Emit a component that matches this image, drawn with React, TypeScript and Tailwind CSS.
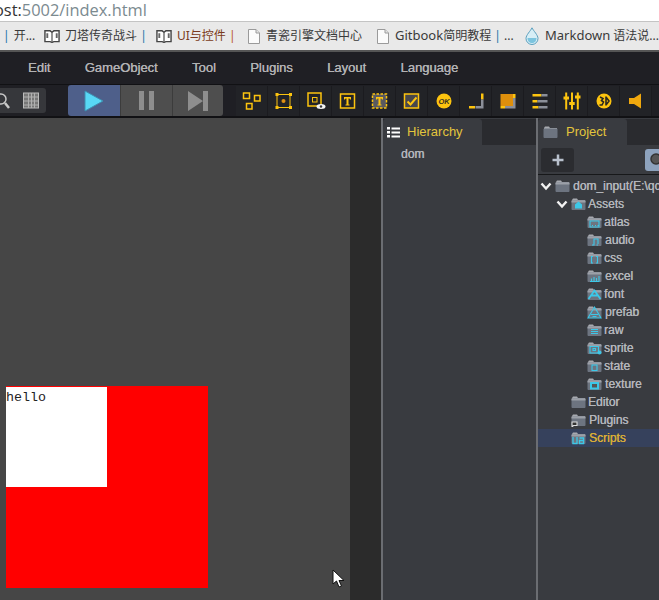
import type { ReactNode } from "react";

const Y = "#fdc40f";
const G = "#8b8f99";
const C = "#3cc8e8";

function BookIcon() {
  return (
    <svg width="16" height="14" viewBox="0 0 17 14" className="shrink-0">
      <path d="M1 1.5h5.500l2 1.500 2-1.500H16V13h-5.500l-2 .8-2-.8H1z" fill="#fff" stroke="#444" strokeWidth="1.500" />
      <path d="M8.500 3v10" stroke="#444" strokeWidth="1.200" />
      <path d="M3.500 4v5M13.500 4v5" stroke="#666" strokeWidth="2" />
    </svg>
  );
}

function DocIcon() {
  return (
    <svg width="12" height="15" viewBox="0 0 12 15" className="shrink-0">
      <path d="M.5.500h7.500l3.500 3.500v10.500H.5z" fill="#fbfbfb" stroke="#9a9a9a" />
      <path d="M8 .5V4h3.500" fill="#e4e4e4" stroke="#9a9a9a" />
    </svg>
  );
}

function DropIcon() {
  return (
    <svg width="14" height="18" viewBox="0 0 14 18" className="shrink-0">
      <path d="M7 .8C5.500 4 1 8 1 11.500a6 6 0 0 0 12 0C13 8 8.500 4 7 .8z" fill="#d7eef6" stroke="#5b9fbd" />
      <path d="M2.500 11h9c0 3-2 5-4.500 5s-4.500-2-4.500-5z" fill="#7cc4de" />
    </svg>
  );
}

function Bookmark({ icon, gap, children }: { icon?: ReactNode; gap: string; children: ReactNode }) {
  return (
    <div className={`flex items-center whitespace-nowrap ${gap}`}>
      {icon}
      <span>{children}</span>
    </div>
  );
}

function ToolCell({ children }: { children: ReactNode }) {
  return <div className="flex h-[30px] w-[32px] items-center justify-center border-r border-[#1b1b1f] bg-[#222327]">{children}</div>;
}

function Tool({ d }: { d: ReactNode }) {
  return (
    <ToolCell>
      <svg width="20" height="20" viewBox="0 0 20 20">{d}</svg>
    </ToolCell>
  );
}

const tools: ReactNode[] = [
  <g fill="none" stroke={Y} strokeWidth="1.500"><rect x="1.500" y="2" width="6" height="5.500" /><rect x="12.500" y="4.500" width="5.500" height="5.500" /><rect x="4.500" y="12.500" width="5.500" height="5.500" /></g>,
  <g><rect x="3" y="3.500" width="13" height="13" fill="none" stroke={Y} /><path d="M1.500 2h3v3h-3zM15 2h3v3h-3zM1.500 15h3v3h-3zM15 15h3v3h-3z" fill={Y} /><circle cx="9.500" cy="10" r="2" fill="#e08f12" /></g>,
  <g><rect x="2" y="2" width="13" height="13" fill="none" stroke={Y} strokeWidth="1.500" /><rect x="6.500" y="6.500" width="4.500" height="4.500" fill="none" stroke={Y} /><ellipse cx="15" cy="15.500" rx="4.500" ry="2.500" fill="#f4f4f4" /><circle cx="15" cy="15.500" r="1.200" fill="#333" /></g>,
  <g><rect x="2.500" y="3" width="14" height="14" fill="none" stroke={Y} strokeWidth="1.500" /><path d="M6 6h7v2.500h-1l-.5-1H10.500v6h1v1h-4v-1h1v-6H7.500L7 8.500H6z" fill={Y} /></g>,
  <g><rect x="2.500" y="3" width="14" height="14" fill="#5a5a60" stroke={Y} strokeWidth="1.500" strokeDasharray="2.500 1.500" /><path d="M6 6h7v2.500h-1l-.5-1H10.500v6h1v1h-4v-1h1v-6H7.500L7 8.500H6z" fill={Y} /></g>,
  <g><rect x="2.500" y="3" width="14" height="14" fill="#47474c" stroke={Y} strokeWidth="1.500" /><path d="M5.500 10.500l3 3 6-7" fill="none" stroke={Y} strokeWidth="2" /></g>,
  <g><circle cx="10" cy="10" r="7.500" fill={Y} /><text x="10" y="12.500" textAnchor="middle" fontSize="7.500" fontWeight="700" fontStyle="italic" fontFamily="Liberation Sans, sans-serif" fill="#3a3320">OK</text></g>,
  <g><path d="M15 2.500h2.500v6H15z" fill={Y} /><path d="M15 8.500h2.500V17.500H9.500V15H15z" fill={G} /><path d="M3 15h6v2.500H3z" fill={Y} /></g>,
  <g><rect x="2.500" y="3" width="12.500" height="12" fill="#de8f0c" /><path d="M15 3h2.500v4H15zM2.500 15H7v2.500H2.500z" fill={Y} /><path d="M15 7h2.500v10.500H7V15h8z" fill={G} /></g>,
  <g><path d="M2.500 3h9v2.500h-9zM2.500 9h5v2.500h-5zM2.500 15h6v2.500h-6z" fill={Y} /><path d="M11.500 3h6v2.500h-6zM7.500 9h10v2.500h-10zM8.500 15h9v2.500h-9z" fill={G} /></g>,
  <g fill={Y}><path d="M3.200 1.500h2v17h-2zM9 1.500h2v17H9zM14.800 1.500h2v17h-2z" /><path d="M1.500 5.500h5.500v3H1.500zM7.200 11h5.500v3H7.200zM13 4.500h5.500v3H13z" /></g>,
  <g><circle cx="10" cy="10" r="7.500" fill={Y} /><path d="M6 6l3 1.500-1.500 2L9.500 11 8 14H5.500M12 5.500v9M12 6l3 4-3 4" fill="none" stroke="#2a2820" strokeWidth="1.600" /></g>,
  <path d="M3 7h5l7-4.500v15L8 13H3z" fill="#f0a80e" />,
];

function FolderIcon({ glyph, tone = "#6d7480" }: { glyph?: ReactNode; tone?: string }) {
  return (
    <svg width="15" height="14" viewBox="0 0 15 14" className="shrink-0">
      <path d="M1 3l1-1.500h4L7 3h7v9.500H1z" fill="#a7aab0" />
      <rect x=".5" y="3.500" width="14" height="9.500" rx="1" fill={tone} />
      <rect x=".5" y="3.500" width="14" height="2" fill="#9ca0a8" />
      <g fill="none" stroke={C} strokeWidth="1.100">{glyph}</g>
    </svg>
  );
}

const glyphs: Record<string, ReactNode> = {
  assets: <path d="M4 7.500L7.500 4.500l3.500 3v4H4z" fill={C} stroke="none" />,
  atlas: <path d="M3 6h9v6H3zM5 10.500h1M8 10.500h1M10.500 10.500h1" />,
  audio: <path d="M5 12h2V6h4v5M9.500 12h1.500" />,
  css: <path d="M6 5.500H4.500v6.500H6M9 5.500h1.500v6.500H9" />,
  excel: <path d="M3 12.500h9.500M4.500 12V9.500M7 12V8M9.500 12V9M12 12V7" />,
  font: <path d="M1.500 12L7.500 3.500l6 8.500M4 8.500h7" strokeWidth="1.800" />,
  prefab: <path d="M1 13L7.500 2 14 13zM4 9.500h7M5.500 11.500h4" />,
  raw: <path d="M4 6.500h7M4 8.500h7M4 10.500h7" />,
  sprite: <g><rect x="3" y="5.500" width="8.500" height="6.500" /><circle cx="12.500" cy="11.500" r="1.500" fill={C} /><rect x="6" y="7.500" width="2.500" height="2" /></g>,
  state: <rect x="5" y="6" width="5" height="5.500" />,
  texture: <g><rect x="3" y="5" width="9" height="7.500" fill={C} stroke="none" /><rect x="5" y="7" width="5" height="3.500" fill="#555" stroke="none" /></g>,
  scripts: <path d="M2 6v6.500h4V6M8.500 7h4v5.500h-4V9.500h4" strokeWidth="1.300" />,
  plugins: <path d="M1 9h5v3.500H2.500L1 14z" fill="#333" stroke="#ddd" />,
};

function Chevron() {
  return (
    <svg width="12" height="9" viewBox="0 0 12 9" className="shrink-0">
      <path d="M1.500 1.500L6 6.500l4.500-5" fill="none" stroke="#f2f2f2" strokeWidth="2.400" />
    </svg>
  );
}

function TreeRow({
  label,
  indent,
  glyph,
  open,
  selected,
  gap = 2,
}: {
  label: string;
  indent: string;
  glyph?: string;
  open?: boolean;
  selected?: boolean;
  gap?: number;
}) {
  return (
    <div className={`flex h-[18px] items-center whitespace-nowrap ${indent} ${selected ? "bg-[#36415c] text-[#d9ad37]" : "text-[#b4b6bb]"}`}>
      {open && (
        <span className="w-[15px] shrink-0">
          <Chevron />
        </span>
      )}
      <FolderIcon glyph={glyph ? glyphs[glyph] : undefined} />
      <span style={{ marginLeft: gap }}>{label}</span>
    </div>
  );
}

export default function App() {
  return (
    <div className="relative flex h-[600px] w-[659px] flex-col overflow-hidden bg-[#464646] font-['Liberation_Sans',sans-serif]">
      {/* browser chrome */}
      <div className="h-[21px] shrink-0 overflow-hidden bg-white font-['Open_Sans',sans-serif] text-[16.4px] leading-[20px] whitespace-nowrap text-[#7b8a90]">
        <span className="ml-[-6px] text-[#333]">ost:</span>5002/index.html
      </div>
      <div className="flex h-[31px] shrink-0 items-center overflow-hidden border-t border-b-2 border-t-[#c4c4c4] border-b-[#555] bg-[#e9e9e9] font-['Noto_Sans','Noto_Sans_CJK_SC',sans-serif] text-[12px] text-[#3a3a3a]">
        <div className="ml-[3px] w-[41px] whitespace-nowrap"><span className="mr-[4px] text-[#1d73a8]">|</span>开...</div>
        <div className="w-[112px]"><Bookmark gap="gap-[5px]" icon={<BookIcon />}>刀塔传奇战斗 <span className="text-[#1d73a8]">|</span></Bookmark></div>
        <div className="w-[92px]"><Bookmark gap="gap-[5px]" icon={<BookIcon />}><span className="text-[#7a3a20]">UI与控件</span> <span className="text-[#b8561a]">|</span></Bookmark></div>
        <div className="w-[129px]"><Bookmark gap="gap-[6px]" icon={<DocIcon />}>青瓷引擎文档中心</Bookmark></div>
        <div className="w-[148px]"><Bookmark gap="gap-[6px]" icon={<DocIcon />}><span className="text-[13px]">Gitbook</span>简明教程 <span className="text-[#1d73a8]">|</span> ...</Bookmark></div>
        <Bookmark gap="gap-[6px]" icon={<DropIcon />}><span className="text-[13px]">Markdown</span> 语法说...</Bookmark>
      </div>

      {/* menu */}
      <div className="flex h-[32px] shrink-0 items-center gap-[34.300px] bg-[#1f1f24] pl-[28px] text-[13px] whitespace-nowrap text-[#b2b2b4] [text-shadow:0.3px_0_0_#b2b2b4]">
        <span>Edit</span>
        <span>GameObject</span>
        <span>Tool</span>
        <span>Plugins</span>
        <span>Layout</span>
        <span>Language</span>
      </div>

      {/* toolbar */}
      <div className="flex h-[34px] shrink-0 items-center border-t border-b-2 border-t-[#111114] border-b-[#111114] bg-[#1f1f24]">
        <div className="flex h-[25px] w-[46px] items-center rounded-r-[3px] bg-[#36373b]">
          <svg width="16" height="18" viewBox="0 0 16 18" className="ml-[-5px]">
            <circle cx="6" cy="7" r="5" fill="none" stroke="#c8c8c8" strokeWidth="1.500" />
            <path d="M10 11l4 5" stroke="#c8c8c8" strokeWidth="2.500" />
          </svg>
          <svg width="17" height="17" viewBox="0 0 17 17" className="ml-[12px]">
            <rect x=".5" y="1" width="15" height="15" fill="#777" stroke="#bbb" />
            <path d="M5.500 1v15M8.500 1v15M11.500 1v15M1 5h14M1 9h14M1 13h14" stroke="#b0b0b0" />
          </svg>
        </div>
        <div className="ml-[22px] flex h-[31px] w-[155px] overflow-hidden rounded-[3px]">
          <div className="flex w-[52px] items-center justify-center bg-[#4e5f8a]">
            <svg width="20" height="22" viewBox="0 0 20 22">
              <path d="M1 1l18 10L1 21z" fill="#58d8f5" stroke="#3f8fb0" />
            </svg>
          </div>
          <div className="flex w-[52px] items-center justify-center gap-[5px] border-l border-[#3c3c3c] bg-[#4e4e4e]">
            <span className="h-[19px] w-[5px] bg-[#8e8e8e]" />
            <span className="h-[19px] w-[5px] bg-[#8e8e8e]" />
          </div>
          <div className="flex w-[51px] items-center justify-center border-l border-[#3c3c3c] bg-[#4e4e4e]">
            <svg width="21" height="20" viewBox="0 0 21 20">
              <path d="M0 0l15 10L0 20zM15 0h5v20h-5z" fill="#8e8e8e" />
            </svg>
          </div>
        </div>
        <div className="ml-[13px] flex items-center">
          {tools.map((t, i) => (
            <Tool key={i} d={t} />
          ))}
        </div>
      </div>

      {/* panels */}
      <div className="flex min-h-0 flex-1">
        <div className="w-[350px] shrink-0 bg-[#464646] pt-[268px] pl-[6px]">
          <div className="h-[202px] w-[202px] bg-[#ff0000] pt-[1px]">
            <div className="h-[100px] w-[101px] bg-white pt-[3px] font-['Liberation_Mono',monospace] text-[13.33px] leading-[15px] text-[#222]">hello</div>
          </div>
        </div>
        <div className="w-[31px] shrink-0 bg-[#2b2b2b]" />
        <div className="flex w-[155px] shrink-0 flex-col border-l-2 border-[#6b6d72] bg-[#393b40]">
          <div className="mt-px flex h-[26px] shrink-0 bg-[#2a2b2f]">
            <div className="flex w-[99px] items-center gap-[7px] rounded-t-[3px] bg-[#393b40] pl-[4px] text-[13px] text-[#e3c53c]">
              <svg width="13" height="11" viewBox="0 0 13 11">
                <path d="M0 0h3v2.500H0zM4.500 .5H13v2H4.500zM0 4h3v2.500H0zM4.500 4.500H13v2H4.500zM0 8h3v2.500H0zM4.500 8.500H13v2H4.500z" fill="#fff" />
              </svg>
              Hierarchy
            </div>
          </div>
          <div className="pt-px pl-[18px] text-[12px] leading-[16px] text-[#b4b6bb] [text-shadow:0.3px_0_0_#b4b6bb]">dom</div>
        </div>
        <div className="flex min-w-0 flex-1 flex-col border-l-2 border-[#6b6d72] bg-[#393b40]">
          <div className="mt-px flex h-[26px] shrink-0 bg-[#2a2b2f]">
            <div className="flex w-[89px] items-center gap-[8px] rounded-t-[3px] bg-[#393b40] pl-[5px] text-[13px] text-[#e3c53c]">
              <svg width="15" height="14" viewBox="0 0 15 14">
                <path d="M1 3l1-1.500h4L7 3h7v9.500H1z" fill="#a7aab0" />
                <rect x=".5" y="3.500" width="14" height="9.500" rx="1" fill="#6d7480" />
              </svg>
              Project
            </div>
          </div>
          <div className="flex h-[30px] shrink-0 items-center border-b border-[#17181a] pl-[3px]">
            <div className="flex h-[24px] w-[33px] shrink-0 items-center justify-center rounded-[3px] bg-[#2b2c30]">
              <svg width="12" height="12" viewBox="0 0 12 12">
                <path d="M6 .5v11M.5 6h11" stroke="#b8c0cc" strokeWidth="2.500" />
              </svg>
            </div>
            <div className="ml-[71px] flex h-[22px] w-[20px] shrink-0 items-center justify-center rounded-[3px] bg-[#8da2bd]">
              <svg width="16" height="16" viewBox="0 0 16 16" className="ml-[3px]">
                <circle cx="7" cy="7" r="5" fill="#555" stroke="#333" strokeWidth="1.500" />
              </svg>
            </div>
          </div>
          <div className="pt-[2px] text-[12px] [text-shadow:0.3px_0_0_currentColor]">
            <TreeRow label="dom_input(E:\qc" indent="pl-[2px]" open gap={3} />
            <TreeRow label="Assets" indent="pl-[18px]" glyph="assets" open />
            <TreeRow label="atlas" indent="pl-[49px]" glyph="atlas" />
            <TreeRow label="audio" indent="pl-[49px]" glyph="audio" gap={3} />
            <TreeRow label="css" indent="pl-[49px]" glyph="css" />
            <TreeRow label="excel" indent="pl-[49px]" glyph="excel" gap={3} />
            <TreeRow label="font" indent="pl-[49px]" glyph="font" />
            <TreeRow label="prefab" indent="pl-[49px]" glyph="prefab" gap={3} />
            <TreeRow label="raw" indent="pl-[49px]" glyph="raw" />
            <TreeRow label="sprite" indent="pl-[49px]" glyph="sprite" />
            <TreeRow label="state" indent="pl-[49px]" glyph="state" />
            <TreeRow label="texture" indent="pl-[49px]" glyph="texture" gap={3} />
            <TreeRow label="Editor" indent="pl-[33px]" />
            <TreeRow label="Plugins" indent="pl-[33px]" glyph="plugins" gap={3} />
            <TreeRow label="Scripts" indent="pl-[33px]" glyph="scripts" selected gap={3} />
          </div>
        </div>
      </div>

      {/* mouse pointer */}
      <svg width="13" height="19" viewBox="0 0 13 19" className="absolute top-[569px] left-[332px]">
        <path d="M1 1v14l3.500-3 2.500 6 2.500-1-2.500-5.500H12z" fill="#fff" stroke="#111" strokeWidth="1" />
      </svg>
    </div>
  );
}
